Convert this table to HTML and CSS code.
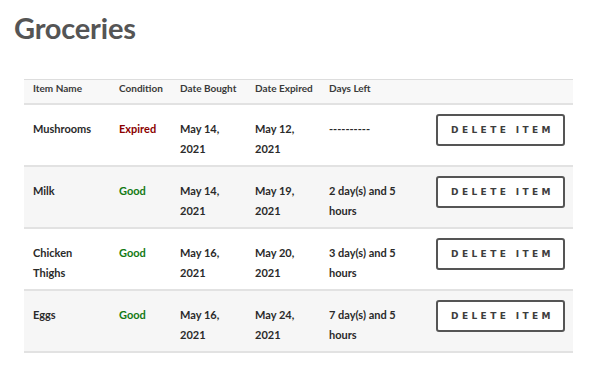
FILE: index.html
```html
<!DOCTYPE html>
<html lang="en">
<head>
  <meta charset="UTF-8" />
  <meta name="viewport" content="width=device-width, initial-scale=1.0"/>
  <title>Groceries</title>
  <link rel="stylesheet" href="styles.css">
</head>
<body>

  <h1>Groceries</h1>

  <table class="grocery-table">
    <colgroup>
      <col class="col-name">
      <col class="col-cond">
      <col class="col-bought">
      <col class="col-expired">
      <col class="col-left">
      <col class="col-action">
    </colgroup>
    <thead>
      <tr>
        <th>Item Name</th>
        <th>Condition</th>
        <th>Date Bought</th>
        <th>Date Expired</th>
        <th>Days Left</th>
        <th></th>
      </tr>
    </thead>
    <tbody>
      <tr>
        <td>Mushrooms</td>
        <td class="expired">Expired</td>
        <td>May 14, 2021</td>
        <td>May 12, 2021</td>
        <td>----------</td>
        <td><button class="delete-btn">Delete Item</button></td>
      </tr>
      <tr>
        <td>Milk</td>
        <td class="good">Good</td>
        <td>May 14, 2021</td>
        <td>May 19, 2021</td>
        <td>2 day(s) and 5 hours</td>
        <td><button class="delete-btn">Delete Item</button></td>
      </tr>
      <tr>
        <td>Chicken Thighs</td>
        <td class="good">Good</td>
        <td>May 16, 2021</td>
        <td>May 20, 2021</td>
        <td>3 day(s) and 5 hours</td>
        <td><button class="delete-btn">Delete Item</button></td>
      </tr>
      <tr>
        <td>Eggs</td>
        <td class="good">Good</td>
        <td>May 16, 2021</td>
        <td>May 24, 2021</td>
        <td>7 day(s) and 5 hours</td>
        <td><button class="delete-btn">Delete Item</button></td>
      </tr>
    </tbody>
  </table>

</body>
</html>
```

FILE: styles.css
```css
* {
  box-sizing: border-box;
}

body {
  margin: 0;
  padding: 0 22px 0 14px;
  font-family: 'Lato', 'Noto Sans', sans-serif;
  color: #2a2a2a;
  background: #fff;
}

h1 {
  margin: 11px 0 34px;
  font-size: 29px;
  line-height: 34px;
  font-weight: 700;
  color: #555;
  letter-spacing: -0.2px;
}

.grocery-table {
  margin-left: 10px;
  width: 549px;
  table-layout: fixed;
  border-collapse: collapse;
  font-size: 11px;
  font-weight: 700;
}

.col-name { width: 86px; }
.col-cond { width: 61px; }
.col-bought { width: 75px; }
.col-expired { width: 74px; }
.col-left { width: 107px; }
.col-action { width: 146px; }

thead tr {
  background: #f8f8f8;
  border-top: 1px solid #ddd;
  border-bottom: 2px solid #e2e2e2;
}

th {
  text-align: left;
  font-size: 10px;
  color: #3a3a3a;
  white-space: nowrap;
  padding: 2px 0 8px 9px;
  height: 24px;
}

tbody tr {
  border-bottom: 2px solid #e2e2e2;
}

tbody tr:nth-child(even) {
  background: #f6f6f6;
}

td {
  padding: 9px 8px 6px 9px;
  line-height: 20px;
  vertical-align: baseline;
}

td.expired {
  color: #8b0000;
}

td.good {
  color: #137a13;
}

.delete-btn {
  width: 129px;
  height: 32px;
  background: #fff;
  border: 2px solid #555;
  border-radius: 3px;
  font-family: 'DejaVu Sans', sans-serif;
  font-size: 9px;
  font-weight: 700;
  text-transform: uppercase;
  letter-spacing: 3.4px;
  color: #3d3d3d;
  padding: 0 0 0 4px;
  cursor: pointer;
}
```
